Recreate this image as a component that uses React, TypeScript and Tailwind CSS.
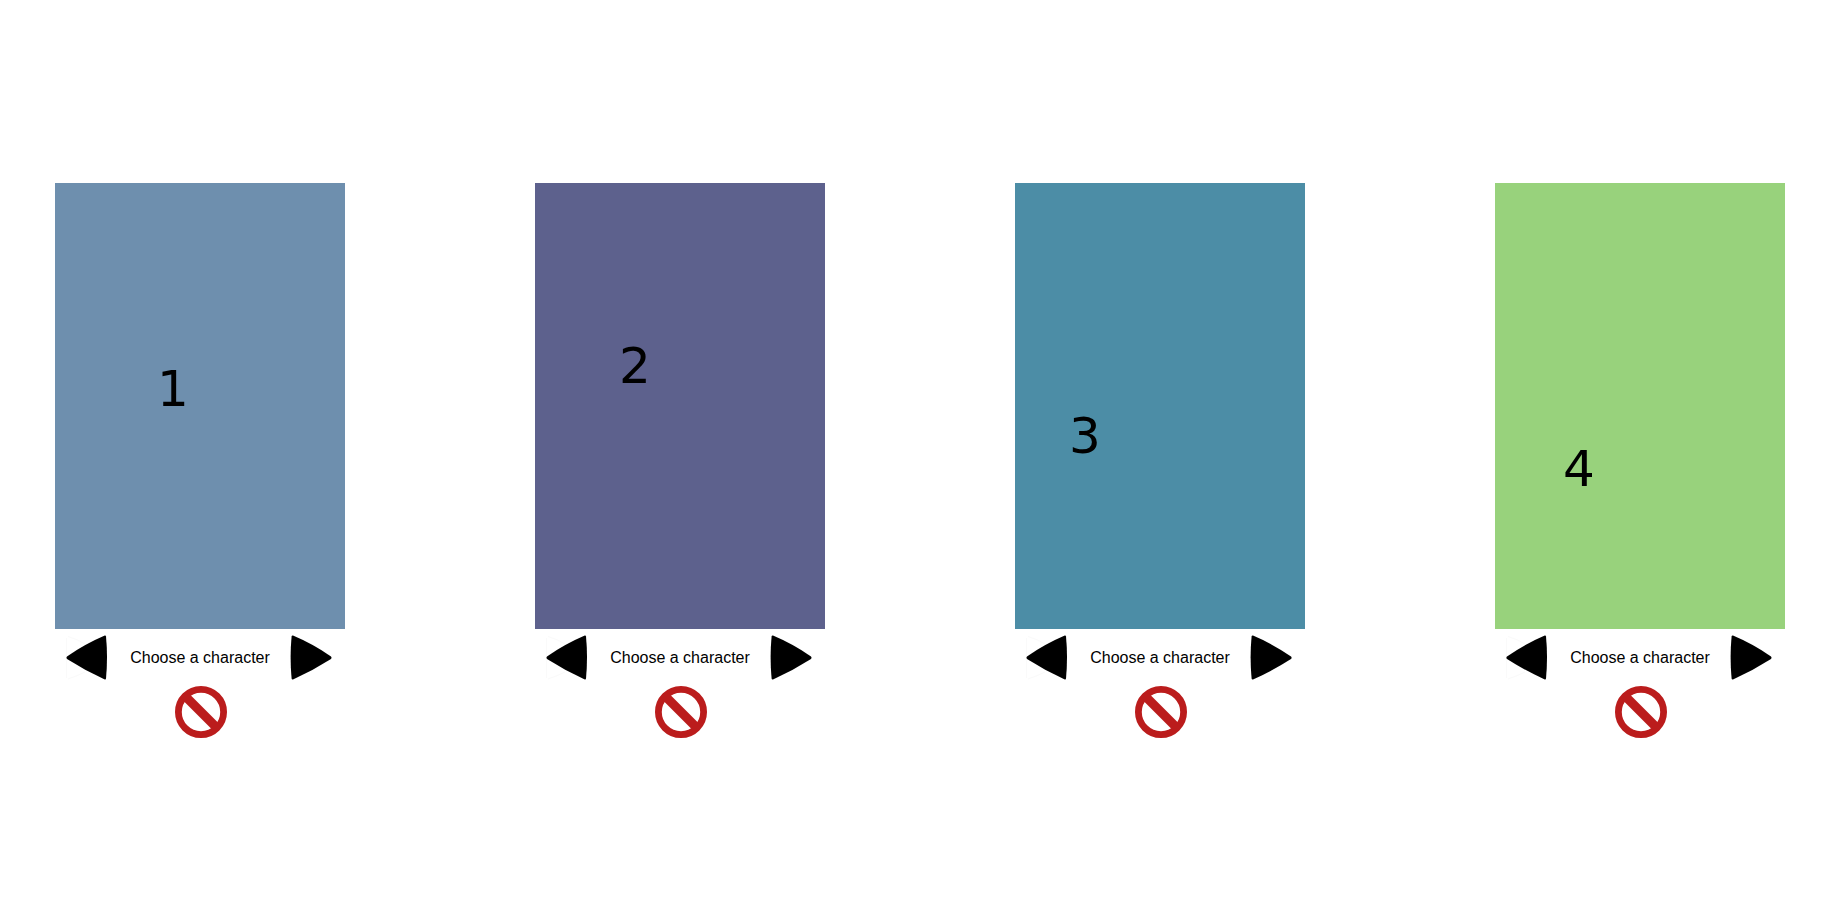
type Slot = { id: number; card: string };

const slots: Slot[] = [
  { id: 1, card: "bg-[#6e8fae] pt-[181px] pl-[102px]" },
  { id: 2, card: "bg-[#5d618d] pt-[158px] pl-[84px]" },
  { id: 3, card: "bg-[#4c8da6] pt-[228px] pl-[54px]" },
  { id: 4, card: "bg-[#98d27c] pt-[261px] pl-[68px]" },
];

function PreviousIcon() {
  return (
    <svg viewBox="0 0 46 46" className="block h-[46px] w-[46px]" aria-hidden="true">
      <path d="M3 1.500Q12 4 20 9M3 44Q12 41 20 37M1.500 3V43" fill="none" stroke="#fafafa" />
      <path d="M2 21.500Q20 9 39.800 .6Q40.800 .3 41 1.500Q43 22 41 43.500Q40.800 44.900 39.800 44.500Q20 35.500 2 24Q.8 22.700 2 21.500Z" />
    </svg>
  );
}

function NextIcon() {
  return (
    <svg viewBox="0 0 46 46" className="block h-[46px] w-[46px]" aria-hidden="true">
      <path d="M42 21.500Q24 9 4 .6Q2.800 .3 2.600 1.500Q.6 22 2.600 43.500Q2.800 44.900 4 44.500Q24 35.500 42 24Q43.200 22.700 42 21.500Z" />
    </svg>
  );
}

function BanIcon() {
  return (
    <svg viewBox="0 0 52 52" className="block h-[52px] w-[52px]" fill="none" stroke="#bb1c1c" aria-hidden="true">
      <circle cx="26" cy="26" r="22.600" strokeWidth="6.800" />
      <path d="M11 11L41 41" strokeWidth="9" />
    </svg>
  );
}

function CharacterSlot({ id, card }: Slot) {
  return (
    <section className="flex w-[290px] shrink-0 flex-col" aria-labelledby={`slot-${id}`}>
      <div className={`h-[446px] font-['DejaVu_Sans',sans-serif] text-[50px] leading-none ${card}`}>{id}</div>
      <div className="flex h-[57px] items-center justify-between px-[10px] pt-px">
        <button type="button" aria-label="Previous character">
          <PreviousIcon />
        </button>
        <h2 id={`slot-${id}`} className="text-base whitespace-nowrap">
          Choose a character
        </h2>
        <button type="button" aria-label="Next character">
          <NextIcon />
        </button>
      </div>
      <button type="button" className="ml-[120px] self-start" aria-label="Remove character">
        <BanIcon />
      </button>
    </section>
  );
}

export default function App() {
  return (
    <main className="flex min-h-screen items-start justify-between bg-white pt-[183px] pr-[46px] pl-[55px] font-['Liberation_Sans',Arial,sans-serif] text-black">
      {slots.map((slot) => (
        <CharacterSlot key={slot.id} {...slot} />
      ))}
    </main>
  );
}
